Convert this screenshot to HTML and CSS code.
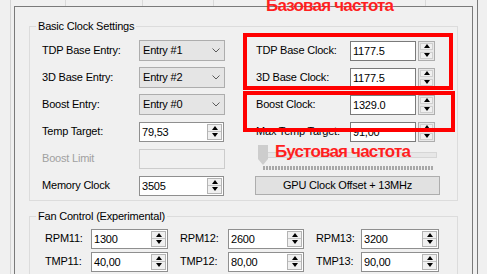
FILE: index.html
```html
<!DOCTYPE html>
<html lang="ru">
<head>
  <meta charset="UTF-8" />
  <title>Basic Clock Settings</title>
  <link rel="stylesheet" href="styles.css">
</head>
<body>
  <div class="screen">
    <div class="outer">
      <div class="tabs">
        <span class="tab" style="width:55px"></span>
        <span class="tab" style="width:77px"></span>
        <span class="tab" style="width:71px"></span>
        <span class="tab" style="width:212px"></span>
      </div>

      <div class="page">
        <fieldset class="group">
          <legend>Basic Clock Settings</legend>
          <div class="clock-grid">
            <label class="lbl">TDP Base Entry:</label>
            <div class="combo">Entry #1 <svg width="8" height="5"><polyline points="0.5,0.5 4,4 7.5,0.5" /></svg></div>
            <label class="lbl lbl-r">TDP Base Clock:</label>
            <div class="clock"><div class="box">1177.5</div><div class="spinner"><span class="up"></span><span class="down"></span></div></div>

            <label class="lbl">3D Base Entry:</label>
            <div class="combo">Entry #2 <svg width="8" height="5"><polyline points="0.5,0.5 4,4 7.5,0.5" /></svg></div>
            <label class="lbl lbl-r">3D Base Clock:</label>
            <div class="clock"><div class="box">1177.5</div><div class="spinner"><span class="up"></span><span class="down"></span></div></div>

            <label class="lbl">Boost Entry:</label>
            <div class="combo">Entry #0 <svg width="8" height="5"><polyline points="0.5,0.5 4,4 7.5,0.5" /></svg></div>
            <label class="lbl lbl-r">Boost Clock:</label>
            <div class="clock"><div class="box">1329.0</div><div class="spinner"><span class="up"></span><span class="down"></span></div></div>

            <label class="lbl">Temp Target:</label>
            <div class="updown w85"><span class="val">79,53</span><span class="spin"><span class="up"></span><span class="down"></span></span></div>
            <label class="lbl lbl-r">Max Temp Target:</label>
            <div class="clock"><div class="box">91,00</div><div class="spinner"><span class="up"></span><span class="down"></span></div></div>

            <label class="lbl disabled">Boost Limit</label>
            <div class="off-box"></div>
            <div class="slider">
              <div class="track"></div>
              <div class="ticks"></div>
              <div class="thumb"></div>
            </div>

            <label class="lbl">Memory Clock</label>
            <div class="updown w85"><span class="val">3505</span><span class="spin"><span class="up"></span><span class="down"></span></span></div>
            <button class="btn">GPU Clock Offset + 13MHz</button>
          </div>
        </fieldset>

        <fieldset class="group fan">
          <legend>Fan Control (Experimental)</legend>
          <div class="fan-grid">
            <label class="fan-lbl">RPM11:</label>
            <div class="updown"><span class="val">1300</span><span class="spin"><span class="up"></span><span class="down"></span></span></div>
            <label class="fan-lbl">RPM12:</label>
            <div class="updown"><span class="val">2600</span><span class="spin"><span class="up"></span><span class="down"></span></span></div>
            <label class="fan-lbl">RPM13:</label>
            <div class="updown"><span class="val">3200</span><span class="spin"><span class="up"></span><span class="down"></span></span></div>

            <label class="fan-lbl">TMP11:</label>
            <div class="updown"><span class="val">40,00</span><span class="spin"><span class="up"></span><span class="down"></span></span></div>
            <label class="fan-lbl">TMP12:</label>
            <div class="updown"><span class="val">80,00</span><span class="spin"><span class="up"></span><span class="down"></span></span></div>
            <label class="fan-lbl">TMP13:</label>
            <div class="updown"><span class="val">90,00</span><span class="spin"><span class="up"></span><span class="down"></span></span></div>
          </div>
        </fieldset>
      </div>
    </div>

    <!-- пометки поверх скриншота -->
    <div class="mark mark-base"></div>
    <div class="mark mark-boost"></div>
    <div class="note note-base">Базовая частота</div>
    <div class="note note-boost">Бустовая частота</div>
  </div>
</body>
</html>
```

FILE: styles.css
```css
body {
  margin: 0;
  background: #f0f0f0;
  font-family: "Liberation Sans", Arial, sans-serif;
  font-size: 11px;
  line-height: 13px;
  letter-spacing: -0.2px;
  color: #000;
}

.screen {
  position: relative;
  width: 487px;
  height: 274px;
  overflow: hidden;
  padding-left: 10px;
  box-sizing: border-box;
}

.outer {
  width: 468px;
  height: 274px;
  border-left: 1px solid #d4d4d4;
  border-right: 1px solid #7a7a7a;
  box-sizing: border-box;
}

.tabs {
  display: flex;
  height: 6px;
}

.tab {
  height: 6px;
  border-right: 1px solid #d9d9d9;
  box-sizing: border-box;
}

.page {
  margin-left: 3px;
  width: 459px;
  height: 268px;
  border: 1px solid #7a7a7a;
  border-bottom: none;
  box-sizing: border-box;
  padding: 13px 14px 0 14px;
}

.group {
  margin: 0;
  padding: 0 0 1px 0;
  border: 1px solid #dcdcdc;
  min-width: 0;
}

.group legend {
  padding: 0 2px;
  margin-left: 6px;
  line-height: 13px;
}

.fan {
  margin-top: 9px;
}

.clock-grid {
  display: grid;
  grid-template-columns: 97px 116px 95px 90px;
  grid-auto-rows: 27px;
  align-items: center;
  padding-left: 12px;
  margin-top: 4px;
}

.lbl-r {
  padding-left: 1px;
}

.disabled {
  color: #a0a0a0;
}

.combo {
  width: 86px;
  height: 21px;
  border: 1px solid #adadad;
  background: #e5e5e5;
  box-sizing: border-box;
  display: flex;
  align-items: center;
  justify-content: space-between;
  padding: 0 4px 0 3px;
}

.combo svg polyline {
  fill: none;
  stroke: #5a5a5a;
  stroke-width: 1;
}

.clock {
  display: flex;
  gap: 2px;
}

.clock .box {
  width: 66px;
  height: 20px;
  border: 1px solid #7a7a7a;
  background: #fff;
  box-sizing: border-box;
  padding-left: 2px;
  line-height: 18px;
}

.spinner {
  width: 17px;
  height: 20px;
  border: 1px solid #adadad;
  background: #e8e8e8;
  box-sizing: border-box;
  padding: 1px;
  display: flex;
  flex-direction: column;
  gap: 2px;
}

.spinner span,
.spin span {
  flex: 1;
  display: flex;
  align-items: center;
  justify-content: center;
}

.spinner .up::before,
.spin .up::before {
  content: "";
  border-left: 3.5px solid transparent;
  border-right: 3.5px solid transparent;
  border-bottom: 4px solid #000;
}

.spinner .down::before,
.spin .down::before {
  content: "";
  border-left: 3.5px solid transparent;
  border-right: 3.5px solid transparent;
  border-top: 4px solid #000;
}

.spinner span {
  background: #f0f0f0;
  border: 1px solid #cfcfcf;
}

.updown {
  height: 20px;
  border: 1px solid #8f8f8f;
  background: #fff;
  box-sizing: border-box;
  display: flex;
}

.w85 {
  width: 85px;
}

.updown .val {
  flex: 1;
  padding-left: 2px;
  line-height: 18px;
}

.spin {
  width: 15px;
  margin: 1px 1px 1px 0;
  border: 1px solid #b4b4b4;
  background: #f0f0f0;
  box-sizing: border-box;
  display: flex;
  flex-direction: column;
}

.spin .up {
  border-bottom: 1px solid #c4c4c4;
}

.off-box {
  width: 86px;
  height: 20px;
  border: 1px solid #cccccc;
  background: #f0f0f0;
  box-sizing: border-box;
}

.slider {
  grid-column: 3 / 5;
  align-self: start;
  height: 25px;
  position: relative;
}

.track {
  margin: 7px 3px 0 7px;
  height: 4px;
  background: #e7e7e7;
  border: 1px solid #d6d6d6;
}

.ticks {
  margin: 8px 7px 0 8px;
  height: 4px;
  background: repeating-linear-gradient(90deg, #a8a8a8 0 2px, transparent 2px 3px);
}

.thumb {
  position: absolute;
  left: 3px;
  top: 0;
  width: 10px;
  height: 20px;
  background: #cdcdcd;
  clip-path: polygon(0 0, 100% 0, 100% 70%, 50% 100%, 0 70%);
}

.btn {
  grid-column: 3 / 5;
  height: 19px;
  border: 1px solid #adadad;
  background: #e1e1e1;
  font: inherit;
  letter-spacing: inherit;
  color: #000;
  padding: 0;
}

.fan-grid {
  display: grid;
  grid-template-columns: 58px 77px 60px 76px 57px 78px;
  grid-auto-rows: 23px;
  align-items: center;
  padding-left: 3px;
  margin-top: 4px;
}

.fan-lbl {
  padding-left: 12px;
}

.mark {
  position: absolute;
  border: 4px solid #ff0000;
  box-sizing: border-box;
}

.mark-base {
  left: 243px;
  top: 33px;
  width: 210px;
  height: 57px;
}

.mark-boost {
  left: 243px;
  top: 91px;
  width: 212px;
  height: 41px;
}

.note {
  position: absolute;
  color: #ff1f1f;
  font-size: 17px;
  font-weight: bold;
  line-height: 18px;
  letter-spacing: -0.8px;
  white-space: nowrap;
}

.note-base {
  left: 266px;
  top: -3px;
}

.note-boost {
  left: 275px;
  top: 143px;
}
```
